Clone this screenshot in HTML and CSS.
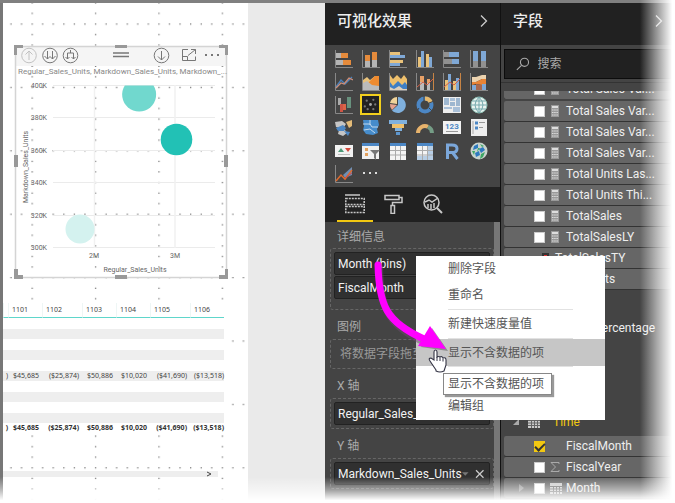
FILE: index.html
```html
<!DOCTYPE html>
<html lang="zh-CN">
<head>
<meta charset="utf-8">
<title>Power BI</title>
<link rel="stylesheet" href="styles.css">
</head>
<body>
<div class="app">
  <main class="report">
    <div class="page">
      <svg class="grid-dots" aria-hidden="true">
        <defs>
          <pattern id="dots" x="28.500" y="20.400" width="63.400" height="63.400" patternUnits="userSpaceOnUse">
            <g fill="#777">
              <path d="M0 0h1.300v1.300h-1.300zM10.600 0h1.300v1.300h-1.300zM21.100 0h1.300v1.300h-1.300zM31.700 0h1.300v1.300h-1.300zM42.300 0h1.300v1.300h-1.300zM52.800 0h1.300v1.300h-1.300z"/>
              <path d="M0 10.600h1.300v1.300h-1.300zM0 21.100h1.300v1.300h-1.300zM0 31.700h1.300v1.300h-1.300zM0 42.300h1.300v1.300h-1.300zM0 52.800h1.300v1.300h-1.300z"/>
            </g>
          </pattern>
        </defs>
        <rect width="100%" height="100%" fill="url(#dots)"/>
      </svg>
      <section class="visual">
        <svg class="chart" viewBox="0 0 214 234" role="img" aria-label="Regular_Sales_Units, Markdown_Sales_Units">
          <rect x="1" y="1" width="212" height="20" fill="#f5f5f5"/>
          <rect x="1.500" y="1.500" width="211" height="231" fill="none" stroke="#d4d4d4" stroke-width="1.500"/>
          <g stroke="#ebebeb">
            <path d="M39 40.500h162M39 72.500h162M39 105.500h162M39 137.500h162M39 170.500h162M39 202.500h162"/>
            <path d="M80.500 40v163M161 40v163" stroke="#f1f1f1" stroke-width="1.500"/>
          </g>
          <path d="M110.800 40.500A17 17 0 1 0 139.500 40.500z" fill="#71d8ce"/>
          <circle cx="162.500" cy="94.500" r="15.800" fill="#22c1b5"/>
          <circle cx="66" cy="184" r="14.500" fill="#d4f2ef"/>
          <g fill="none" stroke="#777" stroke-width="1">
            <g stroke="#c2c2c2"><circle cx="15" cy="10.500" r="7.300"/><path d="M15 15V6M11.500 9.500L15 6l3.500 3.500"/></g>
            <circle cx="36" cy="10.500" r="7.300"/>
            <path d="M33.500 6v8M38.500 6v8M30.500 11l3 3l2.500-2.500l2.500 2.500l3-3"/>
            <circle cx="56.500" cy="10.500" r="7.300"/>
            <path d="M56.500 5v3M53.500 14V8h6v6M51.500 12l2 2l2-2M57.500 12l2 2l2-2"/>
            <path d="M99 8h16M99 11.500h16" stroke-width="1.300"/>
            <circle cx="147.500" cy="10.500" r="7.300"/>
            <path d="M147.500 6v9M144 11.500l3.500 3.500l3.500-3.500"/>
            <path d="M174 4.500h-5.500v11h13v-4M168.500 11.500h5v4M174 10.500l7.500-6M177 4.500h4.500v4.500"/>
          </g>
          <path d="M191 9h2v2h-2zM197 9h2v2h-2zM203 9h2v2h-2z" fill="#777"/>
          <path d="M0 0h9v3H3v7H0zM214 0h-9v3h6v7h3zM0 234h9v-4H4v-6H0zM214 234h-9v-4h6v-6h3zM101 0h12v3h-12zM101 230h12v4h-12zM0 110h4v12H0zM210 110h4v12h-4z" fill="#999"/>
          <text class="chart-text" x="4" y="28.500">Regular_Sales_Units, Markdown_Sales_Units, Markdown_...</text>
          <g class="axis-text" text-anchor="end">
            <text x="33" y="43">400K</text><text x="33" y="75">380K</text><text x="33" y="108">360K</text>
            <text x="33" y="140">340K</text><text x="33" y="173">320K</text><text x="33" y="205">300K</text>
          </g>
          <g class="axis-text" text-anchor="middle">
            <text x="80" y="213">2M</text><text x="161" y="213">3M</text>
            <text x="121" y="227">Regular_Sales_Units</text>
            <text transform="translate(14 122) rotate(-90)">Markdown_Sales_Units</text>
          </g>
        </svg>
      </section>
      <table class="matrix">
        <colgroup><col class="c-cut"><col class="c-s"><col class="c-l"><col class="c-s"><col class="c-s"><col class="c-l"><col class="c-s"></colgroup>
        <thead><tr><th></th><th>1101</th><th>1102</th><th>1103</th><th>1104</th><th>1105</th><th>1106</th></tr></thead>
        <tbody>
          <tr><td colspan="7"></td></tr><tr><td colspan="7"></td></tr>
          <tr><td colspan="7"></td></tr><tr><td colspan="7"></td></tr>
          <tr><td colspan="7"></td></tr>
          <tr><td>)</td><td>$45,685</td><td>($25,874)</td><td>$50,886</td><td>$10,020</td><td>($41,690)</td><td>($13,518)</td></tr>
          <tr><td colspan="7"></td></tr><tr><td colspan="7"></td></tr>
          <tr><td colspan="7"></td></tr><tr><td colspan="7"></td></tr>
        </tbody>
        <tfoot><tr><td>)</td><td>$45,685</td><td>($25,874)</td><td>$50,886</td><td>$10,020</td><td>($41,690)</td><td>($13,518)</td></tr></tfoot>
      </table>
      <div class="hscroll"><svg viewBox="0 0 6 6" width="6" height="6"><path d="M1 1l4 2l-4 2" fill="none" stroke="#444"/></svg></div>
    </div>
  </main>

  <section class="pane viz">
    <header class="pane-head"><h2>可视化效果</h2><svg width="8" height="14" viewBox="0 0 8 14"><path d="M1 1.500L6.500 7L1 12.500" fill="none" stroke="#ccc" stroke-width="1.300"/></svg></header>
    <div class="gallery">
      <svg viewBox="0 0 18 18"><path d="M.5 0v17.500H18" class="ax"/><path d="M1 3h5v5H1zM1 10h7v5H1z" fill="#b5b5b5"/><path d="M6 3h7v5H6zM8 10h8v5H8z" fill="#e58b3c"/></svg>
      <svg viewBox="0 0 18 18"><path d="M.5 0v17.500H18" class="ax"/><path d="M3 11h5v6H3zM10 10h5v7h-5z" fill="#b5b5b5"/><path d="M3 5h5v6H3zM10 2h5v8h-5z" fill="#e58b3c"/></svg>
      <svg viewBox="0 0 18 18"><path d="M.5 0v17.500H18" class="ax"/><path d="M1 2h10v3H1zM1 10h13v3H1z" fill="#e9c27a"/><path d="M1 5h15v3H1zM1 13h10v3H1z" fill="#7fa8d6"/></svg>
      <svg viewBox="0 0 18 18"><path d="M.5 0v17.500H18" class="ax"/><path d="M2 7h3v10H2zM10 4h3v13h-3z" fill="#e9c27a"/><path d="M5 1h3v16H5zM13 7h3v10h-3z" fill="#7fa8d6"/></svg>
      <svg viewBox="0 0 18 18"><path d="M.5 0v17.500H18" class="ax"/><path d="M1 2h5v5H1zM1 9h8v5H1z" fill="#919191"/><path d="M6 2h10v5H6zM9 9h7v5H9z" fill="#7fa8d6"/></svg>
      <svg viewBox="0 0 18 18"><path d="M.5 0v17.500H18" class="ax"/><path d="M3 11h5v6H3zM11 11h5v6h-5z" fill="#919191"/><path d="M3 1h5v10H3zM11 1h5v10h-5z" fill="#7fa8d6"/></svg>

      <svg viewBox="0 0 18 18"><path d="M.5 0v17.500H18" class="ax"/><path d="M1 14L6 7l4 4l7-7" fill="none" stroke="#4c83bd" stroke-width="1.300"/><path d="M1 15L6 10l3 1l5-6l4 2" fill="none" stroke="#cc8e7a" stroke-width="1.300"/></svg>
      <svg viewBox="0 0 18 18"><path d="M.5 0v17.500H18" class="ax"/><path d="M1 7l4-3l3 3l5-4h4v14H1z" fill="#e9c27a"/><path d="M6 10l7-7h4v14H6z" fill="#ee8b30"/><path d="M1 10l4-2l5 4l7 1v4H1z" fill="#bbb"/></svg>
      <svg viewBox="0 0 18 18"><path d="M.5 0v17.500H18" class="ax"/><path d="M1 2l3 4l4-4l4 4l3-4l3 4v11H1z" fill="#efc06c"/><path d="M1 9l3 4l5-5l4 4l3-3l2 3v5H1z" fill="#3f7fc4"/><path d="M1 14l4 2l5-3l4 3h4v1H1z" fill="#ddd0bd"/></svg>
      <svg viewBox="0 0 18 18"><path d="M.5 0v17.500H17.500V0" class="ax"/><path d="M4 3h4v6H4zM11 6h3v4h-3z" fill="#e9a167"/><path d="M4 9h4v8H4zM11 10h3v7h-3z" fill="#bbb"/><path d="M1 14l6-5l4 3l6-6" fill="none" stroke="#d65e42"/><path d="M17.500 0v17" stroke="#c78445"/></svg>
      <svg viewBox="0 0 18 18"><path d="M.5 0v17.500H18" class="ax"/><path d="M2 7h3v10H2zM10 8h3v9h-3z" fill="#e9c27a"/><path d="M5 1h3v16H5zM13 5h3v12h-3z" fill="#7fa8d6"/><path d="M1 14l6-5l4 3l6-6" fill="none" stroke="#d65e42"/><path d="M17.500 0v17" stroke="#c78445"/></svg>
      <svg viewBox="0 0 18 18"><path d="M.5 0v17.500H18" class="ax"/><path d="M2 4h4l6-2h4v5l-4-1l-6 3H2z" fill="#ecd3b0"/><path d="M2 9h4l6-3h4v6h-4l-6-1l-4 1z" fill="#e88336"/><path d="M2 12h4v5H2zM12 11h4v6h-4z" fill="#7fa8d6"/><path d="M6 11l6 1v5H6z" fill="#a9684f"/></svg>

      <svg viewBox="0 0 18 18"><path d="M.5 0v17.500H18" class="ax"/><path d="M3 2h3v7H3z" fill="#aaa"/><path d="M5 8h3v8H5z" fill="#cf5545"/><path d="M8 8h3v6H8z" fill="#db6547"/><path d="M12 1h4v11h-4z" fill="#68917d"/></svg>
      <svg class="selected" viewBox="0 0 18 18"><g fill="#777"><circle cx="5" cy="5" r="1.200"/><circle cx="12" cy="4" r="1.200"/><circle cx="9" cy="9" r="1.500" fill="#aaa"/><circle cx="3" cy="11" r="1.200"/><circle cx="14" cy="9" r="1.200"/><circle cx="6" cy="14" r="1.200"/><circle cx="12" cy="14" r="1.200"/></g></svg>
      <svg viewBox="0 0 18 18"><path d="M9 9V1a8 8 0 1 1-6 13.500z" fill="#7fb0de"/><path d="M8 8V1a8 8 0 0 0-7 6z" fill="#f0d39a"/><path d="M8 9L1 8a8 8 0 0 0 2 6z" fill="#e7a28f"/></svg>
      <svg viewBox="0 0 18 18"><circle cx="9" cy="9" r="6.500" fill="none" stroke="#4c87c5" stroke-width="4"/><path d="M9 2.500a6.500 6.500 0 0 1 6 4" fill="none" stroke="#e5b86d" stroke-width="4"/><path d="M8 0v5M13 7l5-2M3 12l-2 3M13 12l3 3" stroke="#444"/></svg>
      <svg viewBox="0 0 18 18"><path d="M0 1h18v16H0z" fill="#eee"/><path d="M1 2h5v7H1zM7 6h5v4H7zM13 2h4v8h-4z" fill="#9eb7d0"/><path d="M7 2h5v3H7zM1 11h8v2H1zM10 11h7v5h-7z" fill="#a9c0d8"/></svg>
      <svg viewBox="0 0 18 18"><circle cx="9" cy="9" r="8" fill="#e9f3ef" stroke="#8fc0b4"/><path d="M1 9h16M2.500 5h13M2.500 13h13M9 1v16M9 1q-8 8 0 16M9 1q8 8 0 16" fill="none" stroke="#74a9ad"/></svg>

      <svg viewBox="0 0 18 18"><path d="M0 3l7-1l4 3l-2 3l-4 1l-4-1zM4 11h6l2 3l-4 3l-5-2z" fill="#c5c5c5"/><path d="M1 9l7-3l3 3l-2 3H3zM9 12l6 1l-2 4z" fill="#4c87c5"/><path d="M11 3l6-2v6l-3 2z" fill="#e3bb78"/></svg>
      <svg viewBox="0 0 18 18"><path d="M1 1h15l1 5l-2 4l1 4l-5 2l-7-1l-3-4l1-4z" fill="#468ccb"/><path d="M1 5h7l2 3h6M2 11l6-1l5 4M8 1v5" fill="none" stroke="#c2d9ed"/></svg>
      <svg viewBox="0 0 18 18"><path d="M0 1h18v4H0zM6 9h7v3H6z" fill="#7fb0de"/><path d="M3 5h12v4H3z" fill="#efc06c"/><path d="M7 13h4v3H7z" fill="#5d96cd"/></svg>
      <svg viewBox="0 0 18 18"><path d="M2 14a7 7 0 0 1 10-6.300" fill="none" stroke="#e7b36c" stroke-width="4"/><path d="M12 7.700a7 7 0 0 1 4 6.300" fill="none" stroke="#759d86" stroke-width="4"/></svg>
      <svg viewBox="0 0 18 18"><path d="M0 2h18v13H0z" fill="#f2f2f2"/><path d="M3 12.500h12" stroke="#999"/><text x="2" y="10" class="num">123</text></svg>
      <svg viewBox="0 0 18 18"><path d="M1 0h16v17H1z" fill="#eee"/><path d="M3 2v13" stroke="#aaa"/><path d="M5 4h3M5 9h3" stroke="#4c87c5" stroke-width="3"/><path d="M9 3.500h6M9 8.500h4" stroke="#999"/></svg>

      <svg viewBox="0 0 18 18"><path d="M0 3h18v12H0z" fill="#f2f2f2"/><path d="M3 10l3-4l3 4z" fill="#4d9a77"/><path d="M10 6h6l-3 4z" fill="#d44b3c"/><path d="M3 12.500h12" stroke="#bbb"/></svg>
      <svg viewBox="0 0 18 18"><path d="M0 1h17v16H0z" fill="#f0f0f0"/><path d="M0 1h17v3H0z" fill="#4c87c5"/><path d="M3 6h3v3H3zM3 11h3v3H3z" fill="#e3a15e"/><path d="M8 8h10l-4 4v6l-2-2v-4z" fill="#777"/></svg>
      <svg viewBox="0 0 18 18"><path d="M1 1h16v17H1z" fill="#f4f4f4"/><path d="M1 1h16v3H1z" fill="#4c87c5"/><path d="M1 8.500h16M1 13h16M6.500 4v14M11.500 4v14" stroke="#aaa"/></svg>
      <svg viewBox="0 0 18 18"><path d="M1 1h16v17H1z" fill="#f4f4f4"/><path d="M1 1h16v3H1z" fill="#4c87c5"/><path d="M12 4h5v14h-5zM1 14h16v4H1z" fill="#b7cee5"/><path d="M1 8.500h16M1 13h16M6.500 4v14M11.500 4v14" stroke="#aaa"/></svg>
      <svg viewBox="0 0 18 18"><path d="M4.500 17V3H9q5 0 5 3.700T9 10.500H5M9.500 10.500l5 6.500" fill="none" stroke="#7ba7da" stroke-width="3"/></svg>
      <svg viewBox="0 0 18 18"><circle cx="9" cy="9" r="8.500" fill="#c9d3cd"/><path d="M4 4l4-2v4L3 8zM9 7l4-2l2 3l-4 3zM5 11l4-2l1 4l-4 2z" fill="#2e7ac0"/><path d="M10 2l4 2l-2 1zM2 9l3 0l-1 4zM11 12l4-2l-2 5l-3 2zM8 6l2 0l-3 4z" fill="#3da765"/></svg>

      <svg viewBox="0 0 18 18"><path d="M.5 0v17.500H18" class="ax"/><path d="M8 10l9-8v8l-7 3z" fill="#6f8fb5"/><path d="M1 16l5-6l4 4l7-9" fill="none" stroke="#e06a2c" stroke-width="1.500"/><path d="M10 13l7-5" stroke="#c34b54"/></svg>
      <svg viewBox="0 0 18 18"><path d="M1 7h2v2H1zM7 7h2v2H7zM13 7h2v2h-2z" fill="#ddd"/></svg>
    </div>
    <nav class="tabs">
      <button class="tab active" aria-label="字段"><svg width="20" height="20" viewBox="0 0 20 20" fill="none" stroke="#c8c8c8" stroke-width="1.500"><path d="M0 1h15"/><path d="M.8 4.500h18.400v6H.8zM.8 12.500h18.400v6H.8z" stroke-dasharray="2 1"/></svg></button>
      <button class="tab" aria-label="格式"><svg width="20" height="20" viewBox="0 0 20 20" fill="none" stroke="#c8c8c8" stroke-width="1.500"><path d="M1 1.500h14v4H1zM15 3.500h3v5H8.500v3M7 11.500h3.500v8H7z"/></svg></button>
      <button class="tab" aria-label="分析"><svg width="20" height="20" viewBox="0 0 20 20" fill="none" stroke="#c8c8c8" stroke-width="1.500"><circle cx="8.500" cy="8.500" r="7.500"/><path d="M14 14l5 5" stroke-width="2"/><path d="M2 8l4-2l3 2l6-4M5 10v4M8 10v5M11 9v5"/></svg></button>
    </nav>
    <div class="wells">
      <h3>详细信息</h3>
      <div class="well"><div class="chip">Month (bins)</div><div class="chip">FiscalMonth</div><div class="room"></div></div>
      <h3>图例</h3>
      <div class="well empty">将数据字段拖至此处</div>
      <h3>X 轴</h3>
      <div class="well"><div class="chip">Regular_Sales_Units</div></div>
      <h3>Y 轴</h3>
      <div class="well"><div class="chip">Markdown_Sales_Units<svg width="26" height="10" viewBox="0 0 26 10"><path d="M0 3h7l-3.500 4z" fill="#777"/><path d="M15 1l8 8M23 1l-8 8" stroke="#ccc" stroke-width="1.300"/></svg></div></div>
    </div>
  </section>

  <section class="pane fields">
    <header class="pane-head"><h2>字段</h2><svg width="8" height="14" viewBox="0 0 8 14"><path d="M1 1.500L6.500 7L1 12.500" fill="none" stroke="#ccc" stroke-width="1.300"/></svg></header>
    <div class="search"><svg width="16" height="16" viewBox="0 0 16 16" fill="none" stroke="#aaa" stroke-width="1.300"><circle cx="10" cy="6" r="4.800"/><path d="M6.500 9.500L1 15"/></svg><input type="text" aria-label="搜索" placeholder="搜索"></div>
    <svg class="defs" width="0" height="0"><defs>
      <symbol id="calc" viewBox="0 0 10 12"><path d="M1 0h8v12H1z" fill="#999"/><path d="M2 1h6v2H2z" fill="#ddd"/><path d="M2 5h6M2 7.500h6M2 10h6" stroke="#ddd" stroke-dasharray="1.500 .7"/></symbol>
      <symbol id="cal" viewBox="0 0 12 12"><path d="M0 1h12v11H0z" fill="#ccc"/><path d="M0 4.500h12M0 7h12M0 9.500h12M3.500 4v8M6.500 4v8M9.500 4v8" stroke="#666"/></symbol>
    </defs></svg>
    <div class="list">
      <div class="cut"><label class="row"><input type="checkbox"><svg class="ic"><use href="#calc"/></svg><span>Total Sales Var...</span></label></div>
      <label class="row"><input type="checkbox"><svg class="ic"><use href="#calc"/></svg><span>Total Sales Var...</span></label>
      <label class="row"><input type="checkbox"><svg class="ic"><use href="#calc"/></svg><span>Total Sales Var...</span></label>
      <label class="row"><input type="checkbox"><svg class="ic"><use href="#calc"/></svg><span>Total Sales Var...</span></label>
      <label class="row"><input type="checkbox"><svg class="ic"><use href="#calc"/></svg><span>Total Units Las...</span></label>
      <label class="row"><input type="checkbox"><svg class="ic"><use href="#calc"/></svg><span>Total Units Thi...</span></label>
      <label class="row"><input type="checkbox"><svg class="ic"><use href="#calc"/></svg><span>TotalSales</span></label>
      <label class="row"><input type="checkbox"><svg class="ic"><use href="#calc"/></svg><span>TotalSalesLY</span></label>
      <div class="row drill"><svg width="7" height="10" viewBox="0 0 7 10"><path d="M0 0h7v10H0z" fill="#333"/><path d="M2 2h3v6H2z" fill="#d33"/></svg><span>TotalSalesTY</span></div>
      <div class="row units"><span>Total Units</span></div>
      <div class="plain">Percentage</div>
      <div class="group"><svg width="6" height="6" viewBox="0 0 6 6"><path d="M6 0v6H0z" fill="#aaa"/></svg><svg class="cal"><use href="#cal"/></svg><span>Time</span></div>
      <label class="row"><input type="checkbox" checked><svg class="ic"></svg><span>FiscalMonth</span></label>
      <label class="row"><input type="checkbox"><svg class="ic" viewBox="0 0 10 12"><path d="M9 3V1.500H1L5.500 6L1 10.500h8V9" fill="none" stroke="#aaa"/></svg><span>FiscalYear</span></label>
      <label class="row month"><svg class="tri" width="5" height="8" viewBox="0 0 5 8"><path d="M0 0l5 4l-5 4z" fill="#999"/></svg><input type="checkbox"><svg class="cal"><use href="#cal"/></svg><span>Month</span></label>
    </div>
  </section>
</div>

<div class="menu" role="menu">
  <button role="menuitem">删除字段</button>
  <button role="menuitem">重命名</button>
  <hr>
  <button role="menuitem">新建快速度量值</button>
  <hr>
  <button role="menuitem" class="hot">显示不含数据的项</button>
  <hr>
  <div class="tip" role="tooltip">显示不含数据的项</div>
  <button role="menuitem">编辑组</button>
</div>

<svg class="callout" width="80" height="124" viewBox="0 0 80 124" aria-hidden="true">
  <path d="M8 10C9 50 16 69 54 85" fill="none" stroke="#6b4a6b" stroke-opacity=".5" stroke-width="7" stroke-linecap="round" transform="translate(1.500 1.500)"/>
  <path d="M62 72L78 95L51 91z" fill="#555" fill-opacity=".5"/>
  <path d="M8 9C9 49 16 66 54 83" fill="none" stroke="#f0f" stroke-width="7" stroke-linecap="round"/>
  <path d="M60 70L76 93L48 90z" fill="#f0f"/>
  <path d="M66 114L60 105q-2-3 1-3l3 2V96q0-2 1.500-2t1.500 2v5q2-1 3 0q2-1 3 1q3-1 3 2v5l-2 6q-4 2-8 0z" fill="#fff" stroke="#334" stroke-width="1.100"/>
  <path d="M67 101v4M70 101.500v3.500M73 102.500v3" stroke="#334"/>
</svg>
<div class="fade-right"></div>
<div class="fade-bottom"></div>
</body>
</html>
```
FILE: styles.css
```css
* { box-sizing: border-box; }

body {
  margin: 0;
  position: relative;
  height: 100vh;
  overflow: hidden;
  background: #fff;
  color: #eee;
  font: 12px/16px Roboto, "Noto Sans CJK SC", sans-serif;
}

.app {
  display: grid;
  grid-template-columns: minmax(0, 325fr) minmax(0, 176fr) minmax(0, 174fr);
  height: 100%;
  border-top: 3px solid #808080;
}

/* Report canvas */
.report {
  display: flex;
  overflow: hidden;
  border-left: 3px solid #777;
  background: #eaeaea;
}

.page {
  position: relative;
  flex: 0 0 245px;
  background: #fff;
}

.grid-dots {
  position: absolute;
  inset: 0;
  width: 100%;
  height: 100%;
}

.visual {
  position: relative;
  margin: 42px 20px 0 11px;
}

.chart { display: block; width: 100%; }
.chart-text { font-size: 8px; fill: #888; }
.axis-text { font-size: 7px; fill: #666; }

.matrix {
  position: relative;
  width: 221px;
  margin-top: 24px;
  table-layout: fixed;
  border-collapse: separate;
  border-spacing: 0;
  background: #fff;
  color: #444;
  font-family: "Noto Sans", sans-serif;
  font-size: 7px;
  line-height: 10px;
}

.c-cut { width: 5px; }
.c-s { width: 34px; }
.c-l { width: 40px; }

.matrix th {
  height: 15px;
  padding: 0 3px;
  border-bottom: 1px solid #5fd6cb;
  border-left: 1px solid #eef6f5;
  text-align: left;
  font-weight: 400;
}

.matrix td { height: 10px; padding: 0 3px 0 0; text-align: right; white-space: nowrap; }
.matrix td:first-child { padding: 0; }
.matrix td:last-child { padding: 0; }
.matrix tbody tr:nth-child(odd) td { height: 11px; }
.matrix tbody tr:nth-child(even) { background: #eee; }
.matrix tfoot { font-weight: 700; color: #333; }

.hscroll {
  position: relative;
  display: flex;
  justify-content: flex-end;
  width: 215px;
  margin-top: 38px;
  padding-right: 6px;
  background: #eee;
}

/* Panes */
.pane {
  display: flex;
  flex-direction: column;
  min-width: 0;
  overflow: hidden;
  border-right: 1px solid #111;
  background: #444;
}

.pane-head {
  display: flex;
  flex: 0 0 42px;
  align-items: center;
  justify-content: space-between;
  padding: 0 12px 6px;
  background: #212121;
}

h2 { margin: 0; font-size: 15px; font-weight: 500; line-height: 20px; }

.gallery {
  display: grid;
  grid-template-columns: repeat(6, 27px);
  grid-auto-rows: 23px;
  place-items: center;
  padding: 2px 5px;
}

.gallery svg { width: 18px; height: 18px; }
.gallery .selected { width: 21px; height: 21px; border: 2px solid #f2cf1d; background: #222; }
.ax { fill: none; stroke: #888; }
.num { font: 700 8px Roboto, sans-serif; fill: #4c87c5; }

.tabs {
  display: flex;
  flex: 0 0 35px;
  gap: 3px;
  padding: 0 12px;
  background: #212121;
}

.tab {
  width: 36px;
  padding: 4px 0 0;
  border: 0;
  border-bottom: 2px solid transparent;
  background: none;
}

.tab.active { border-color: #f2c811; }

.wells {
  flex: 1;
  overflow: hidden;
  padding: 0 0 0 5px;
  border-right: 6px solid #777;
}

h3 {
  margin: 0;
  padding: 8px 7px 4px;
  color: #aaa;
  font-size: 12px;
  font-weight: 400;
  line-height: 14px;
}

.well + h3 { padding: 10px 7px 5px; }

.well {
  display: flex;
  flex-direction: column;
  gap: 1px;
  padding: 3px;
  border: 1px dashed #666;
  border-radius: 3px;
}

.empty { padding: 6px 9px; color: #999; white-space: nowrap; overflow: hidden; }

.chip {
  display: flex;
  align-items: center;
  justify-content: space-between;
  height: 23px;
  padding: 0 3px;
  border: 1px solid #222;
  border-radius: 2px;
  background: #303030;
  color: #f2f2f2;
  white-space: nowrap;
}

.room { height: 6px; }

/* Field list */
.fields { border-right: 0; }

.search {
  display: flex;
  align-items: center;
  gap: 8px;
  height: 30px;
  margin: 4px 4px 3px 3px;
  padding: 0 11px;
  border: 1px solid #0c0c0c;
  background: #212121;
}

.search input {
  width: 100%;
  min-width: 0;
  padding: 0;
  border: 0;
  outline: 0;
  background: none;
  font: inherit;
}

.search input::placeholder { color: #aaa; }
.defs { position: absolute; }

.list {
  flex: 1;
  overflow: hidden;
  padding: 8px 4px 0 3px;
  border-top: 1px solid #333;
}

.cut { display: flex; align-items: flex-end; height: 8px; margin-bottom: 2px; overflow: hidden; }
.cut .row { flex: 1; margin: 0; }

.row {
  display: flex;
  align-items: center;
  gap: 5px;
  height: 20px;
  margin-bottom: 1px;
  padding-left: 30px;
  border-radius: 2px;
  background: #666;
  box-shadow: 0 1px 0 #333;
  white-space: nowrap;
}

.row input {
  display: grid;
  flex: none;
  place-items: center;
  width: 11px;
  height: 11px;
  margin: 0;
  appearance: none;
  border: 1px solid #ccc;
  background: #fff;
}

.row input:checked { border-color: #f2c811; background: #f2c811; }

.row input:checked::after {
  content: "";
  width: 4px;
  height: 8px;
  border: solid #333;
  border-width: 0 2px 2px 0;
  transform: translateY(-1px) rotate(45deg);
}

.ic { flex: none; width: 10px; height: 12px; margin-right: 1px; }
.cal { flex: none; width: 12px; height: 12px; margin-right: -1px; }
.drill { gap: 6px; padding-left: 38px; }
.units { padding-left: 54px; }
.plain { padding: 30px 16px 0 0; text-align: right; }

.group {
  display: flex;
  align-items: center;
  gap: 9px;
  height: 20px;
  margin: 76px 0 4px;
  padding-left: 9px;
  color: #f2c811;
}

.group span { padding-left: 5px; }
.month { padding-left: 15px; }
.tri { margin-right: 5px; }

/* Context menu over the panes */
.menu {
  position: absolute;
  top: 256px;
  left: 416px;
  width: 189px;
  padding-bottom: 3px;
  background: #fff;
}

.menu button {
  display: block;
  width: 100%;
  height: 26px;
  padding: 0 32px;
  border: 0;
  background: none;
  color: #555;
  font: inherit;
  text-align: left;
}

.menu .hot { height: 27px; background: #c6c6c6; }
.menu button:last-child { height: 22px; }

.menu hr {
  height: 1px;
  margin: 1px 32px;
  border: 0;
  background: #e2e2e2;
}

.menu hr:has(+ .hot) { margin-bottom: 0; }
.menu .hot + hr { margin: 0 32px; }

.tip {
  width: 109px;
  margin: 6px 27px 0;
  padding: 1px 4px;
  border: 1px solid #888;
  background: #fff;
  box-shadow: 2px 2px 1px #999;
  color: #555;
  line-height: 18px;
  white-space: nowrap;
}

.callout { position: absolute; top: 256px; left: 370px; }

.fade-right,
.fade-bottom { position: absolute; right: 0; bottom: 0; pointer-events: none; }

.fade-right {
  top: 0;
  width: 35px;
  background: linear-gradient(90deg, transparent, rgba(255, 255, 255, .5) 45%, #fff 92%);
}

.fade-bottom {
  left: 0;
  height: 26px;
  background: linear-gradient(transparent, rgba(255, 255, 255, .5) 50%, #fff 90%);
}
```
